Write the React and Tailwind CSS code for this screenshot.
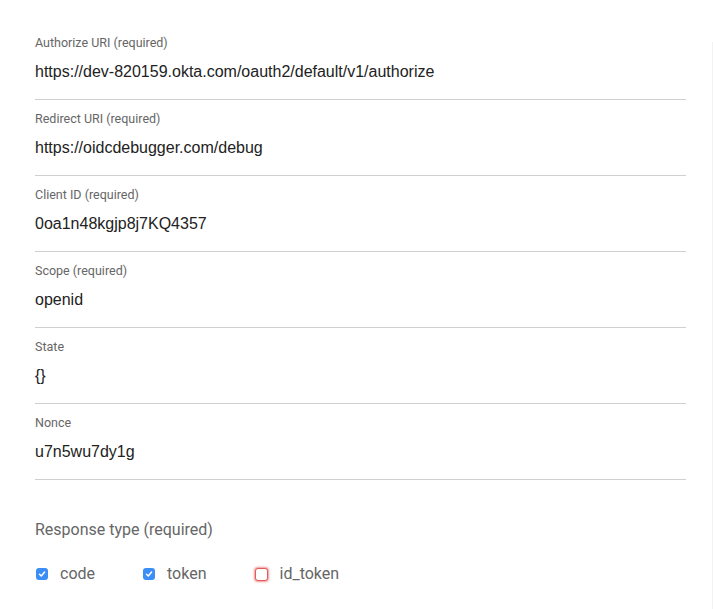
import React from "react";

const fields = [
  ["Authorize URI (required)", "https://dev-820159.okta.com/oauth2/default/v1/authorize"],
  ["Redirect URI (required)", "https://oidcdebugger.com/debug"],
  ["Client ID (required)", "0oa1n48kgjp8j7KQ4357"],
  ["Scope (required)", "openid"],
  ["State", "{}"],
  ["Nonce", "u7n5wu7dy1g"],
];

function Checked() {
  return (
    <span className="flex h-[12px] w-[12px] items-center justify-center rounded-[3px] bg-[#3b8ef5]">
      <svg width="8" height="8" viewBox="0 0 8 8" fill="none">
        <path d="M1.5 4.2 L3.3 6 L6.6 2" stroke="white" strokeWidth="1.5" strokeLinecap="round" strokeLinejoin="round" />
      </svg>
    </span>
  );
}

export default function App() {
  return (
    <div className="flex h-[609px] w-[713px] bg-white">
      <div className="w-[712px] pl-[35px] pr-[26px] pt-[24px]">
        {fields.map(([label, value]) => (
          <div key={label} className="border-b border-[#d0d0d0] pt-[12px] pb-[17px]">
            <div className="h-[14px] text-[12.5px] leading-[14px] text-[#666] font-['Roboto',sans-serif]">{label}</div>
            <div className="mt-[12px] h-[20px] text-[16px] leading-[20px] text-[#222] font-['Liberation_Sans',Arial,sans-serif]">{value}</div>
          </div>
        ))}
        <div className="mt-[40px] h-[20px] text-[16px] leading-[20px] text-[#666] font-['Roboto',sans-serif]">Response type (required)</div>
        <div className="mt-[24px] flex items-center text-[16px] leading-[20px] text-[#666] font-['Roboto',sans-serif]">
          <div className="ml-[1px] flex items-center">
            <Checked />
            <span className="ml-[12px]">code</span>
          </div>
          <div className="ml-[48px] flex items-center">
            <Checked />
            <span className="ml-[12px]">token</span>
          </div>
          <div className="ml-[48px] flex items-center">
            <span className="h-[13px] w-[13px] rounded-[3px] border border-[#e05a5a] bg-white shadow-[0_0_2px_1px_rgba(230,80,80,0.6)]" />
            <span className="ml-[12px]">id_token</span>
          </div>
        </div>
      </div>
      <div className="mt-[42px] w-[1px] bg-[#f2f2f2]" />
    </div>
  );
}
